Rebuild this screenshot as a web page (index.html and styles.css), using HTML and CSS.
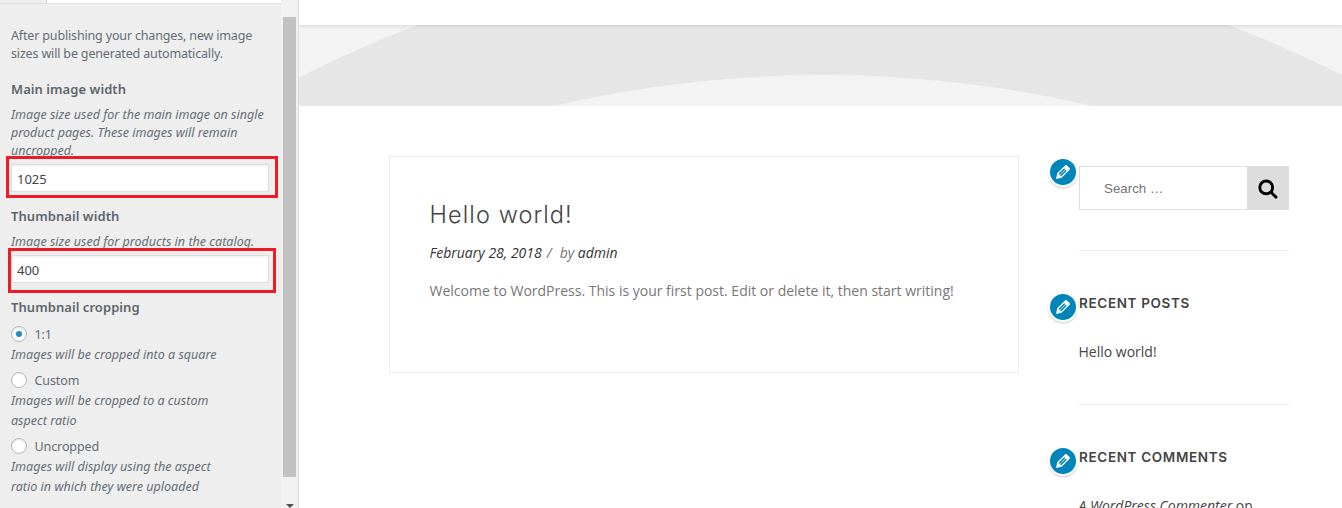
FILE: index.html
```
<!DOCTYPE html>
<html lang="en">
<head>
<meta charset="utf-8">
<title>Customizer</title>
<link rel="stylesheet" href="styles.css">
</head>
<body>
<svg width="0" height="0" class="defs">
  <symbol id="pencil" viewBox="0 0 20 20"><path d="M13.89 3.39l2.71 2.72c.46.46.42 1.24.03 1.64l-8.01 8.02-5.56 1.16 1.16-5.58s7.6-7.63 7.99-8.03c.39-.39 1.22-.39 1.68.07zm-2.73 2.79l-5.59 5.61 1.11 1.11 5.54-5.65zm-2.97 8.23l5.58-5.6-1.07-1.08-5.59 5.6z"/></symbol>
</svg>
<div class="app">
  <aside class="controls">
    <div class="pane">
      <div class="pane-head"><span class="back"></span></div>
      <div class="pane-body">
        <p class="text intro">After publishing your changes, new image<br>sizes will be generated automatically.</p>
        <h3 class="label">Main image width</h3>
        <p class="text desc">Image size used for the main image on single<br>product pages. These images will remain<br>uncropped.</p>
        <div class="field"><div class="input">1025</div><span class="mark mark-main"></span></div>
        <h3 class="label">Thumbnail width</h3>
        <p class="text desc">Image size used for products in the catalog.</p>
        <div class="field"><div class="input">400</div><span class="mark mark-thumb"></span></div>
        <h3 class="label">Thumbnail cropping</h3>
        <div class="option"><span class="radio on"></span>1:1</div>
        <p class="text note">Images will be cropped into a square</p>
        <div class="option"><span class="radio"></span>Custom</div>
        <p class="text note">Images will be cropped to a custom<br>aspect ratio</p>
        <div class="option"><span class="radio"></span>Uncropped</div>
        <p class="text note">Images will display using the aspect<br>ratio in which they were uploaded</p>
      </div>
    </div>
    <div class="scrollbar"><div class="thumb"></div><svg class="arrow" width="8" height="4" viewBox="0 0 8 4"><path d="M0 0h8L4 4z"/></svg></div>
  </aside>
  <main class="preview">
    <header class="site-head"></header>
    <div class="hero">
      <svg width="1043" height="81" viewBox="299 25 1043 81"><circle cx="823" cy="1103" r="1151.6" fill="#e6e6e6"/><circle cx="823" cy="1258" r="1183" fill="#f3f3f3"/></svg>
    </div>
    <div class="columns">
      <article class="post">
        <h2 class="post-title">Hello world!</h2>
        <div class="meta"><a>February 28, 2018</a><span class="slash">/</span><span class="by">by <a>admin</a></span></div>
        <p class="excerpt">Welcome to WordPress. This is your first post. Edit or delete it, then start writing!</p>
      </article>
      <aside class="widgets">
        <section class="widget search-widget">
          <span class="edit"><svg width="20" height="20"><use href="#pencil"/></svg></span>
          <div class="search"><div class="query">Search …</div><div class="go"><svg width="20" height="20" viewBox="0 0 20 20"><circle cx="8.2" cy="8.4" r="6.4"/><path d="M13 13.2l5 4.9"/></svg></div></div>
        </section>
        <section class="widget posts-widget">
          <span class="edit"><svg width="20" height="20"><use href="#pencil"/></svg></span>
          <h4 class="widget-title">RECENT POSTS</h4>
          <div class="item">Hello world!</div>
        </section>
        <section class="widget">
          <span class="edit"><svg width="20" height="20"><use href="#pencil"/></svg></span>
          <h4 class="widget-title">RECENT COMMENTS</h4>
          <div class="item"><i>A WordPress Commenter</i> on</div>
        </section>
      </aside>
    </div>
  </main>
</div>
</body>
</html>
```
FILE: styles.css
```
* { box-sizing: border-box; margin: 0; padding: 0; }
body { width: 1342px; height: 508px; overflow: hidden; background: #fff; font-family: "Open Sans", sans-serif; }
.defs { display: block; }
.app { display: flex; height: 508px; overflow: hidden; }
.controls { display: flex; width: 299px; height: 508px; background: #eee; border-right: 1px solid #ddd; font-family: "Noto Sans", sans-serif; font-size: 13px; color: #656d76; }
.pane { width: 281px; }
.pane-head { height: 4px; background: #fff; border-bottom: 1px solid #ddd; }
.back { display: block; width: 47px; height: 3px; background: #eee; border-right: 1px solid #ddd; }
.pane-body { padding: 23px 0 0 11px; }
.text { line-height: 18px; white-space: nowrap; font-size: 12.5px; }
.desc, .note { font-style: italic; letter-spacing: .02px; }
.intro { height: 53px; letter-spacing: -.16px; }
.label { height: 26px; line-height: 18px; font-size: 13px; font-weight: 600; letter-spacing: .06px; white-space: nowrap; color: #5d656e; }
.field { position: relative; height: 47px; padding-top: 4px; }
.input { width: 258px; height: 28px; padding-left: 5px; border: 1px solid #ddd; background: #fff; box-shadow: inset 0 1px 2px rgba(0,0,0,.07); color: #40454a; line-height: 28px; font-size: 13px; }
.mark { position: absolute; border: 3px solid #ed1c24; }
.mark-main { left: -5px; top: -4px; width: 272px; height: 42px; }
.mark-thumb { left: -3px; top: -3px; width: 268px; height: 45px; }
.option { display: flex; align-items: center; gap: 7.5px; height: 20px; font-size: 12.5px; letter-spacing: -.1px; }
.radio { display: flex; align-items: center; justify-content: center; width: 16px; height: 16px; border: 1px solid #b4b9be; border-radius: 50%; background: #fff; box-shadow: inset 0 1px 2px rgba(0,0,0,.1); }
.radio.on::before { content: ""; width: 6px; height: 6px; border-radius: 50%; background: #1e8cbe; }
.note { line-height: 20px; padding: 1px 0 5px; }
.scrollbar { display: flex; flex-direction: column; width: 17px; padding: 17px 0 0 2px; background: #f1f1f1; }
.thumb { width: 13px; height: 460px; background: #c1c1c1; }
.arrow { margin: 27px 0 0 3px; fill: #505050; }
.preview { width: 1043px; }
.site-head { position: relative; height: 25px; background: #fff; box-shadow: 0 1px 4px rgba(0,0,0,.12); clip-path: inset(0 0 -6px 0); }
.hero { height: 81px; background: #f3f3f3; border-bottom-left-radius: 3px; overflow: hidden; }
.hero svg { display: block; }
.columns { display: flex; gap: 60px; padding: 50px 0 0 90px; }
.post { width: 630px; height: 217px; border: 1px solid #ededed; padding: 38px 0 0 39.5px; }
.post-title { font: 300 23.5px/40px "Inter", sans-serif; letter-spacing: 1.1px; color: #444; }
.meta { display: flex; height: 20px; margin-top: 8px; line-height: 20px; font-size: 14px; font-style: italic; color: #777; white-space: nowrap; }
.meta a { color: #333; }
.slash { margin-left: 5px; }
.by { margin-left: 8px; }
.excerpt { margin-top: 18px; line-height: 20px; font-size: 14px; color: #777; white-space: nowrap; }
.widgets { width: 210px; padding-top: 10px; }
.widget { position: relative; }
.edit { position: absolute; left: -31px; top: -2px; display: flex; align-items: center; justify-content: center; width: 30px; height: 30px; border: 2px solid #fff; border-radius: 50%; background: #0085ba; box-shadow: 0 2px 1px rgba(46,68,83,.15); }
.edit svg { flex: none; fill: #fff; }
.search-widget { height: 85px; border-bottom: 1px solid #ededed; }
.search-widget .edit { top: -9px; }
.search { display: flex; height: 44px; }
.query { width: 168px; border: 1px solid #ddd; border-right: 0; padding-left: 24px; line-height: 44px; font-family: "Liberation Sans", sans-serif; font-size: 13.33px; color: #757575; }
.go { display: flex; align-items: center; justify-content: center; width: 42px; padding-top: 2px; background: #ddd; }
.go svg { fill: none; stroke: #000; stroke-width: 2.9; stroke-linecap: round; }
.posts-widget { height: 111px; border-bottom: 1px solid #ededed; }
.posts-widget, .posts-widget + .widget { margin-top: 43px; }
.widget-title { line-height: 18px; font-family: "Inter", sans-serif; font-size: 13.5px; font-weight: 600; letter-spacing: .65px; color: #444; white-space: nowrap; }
.item { margin-top: 30px; margin-left: -.5px; line-height: 20px; font-size: 14px; color: #444; white-space: nowrap; }
```
